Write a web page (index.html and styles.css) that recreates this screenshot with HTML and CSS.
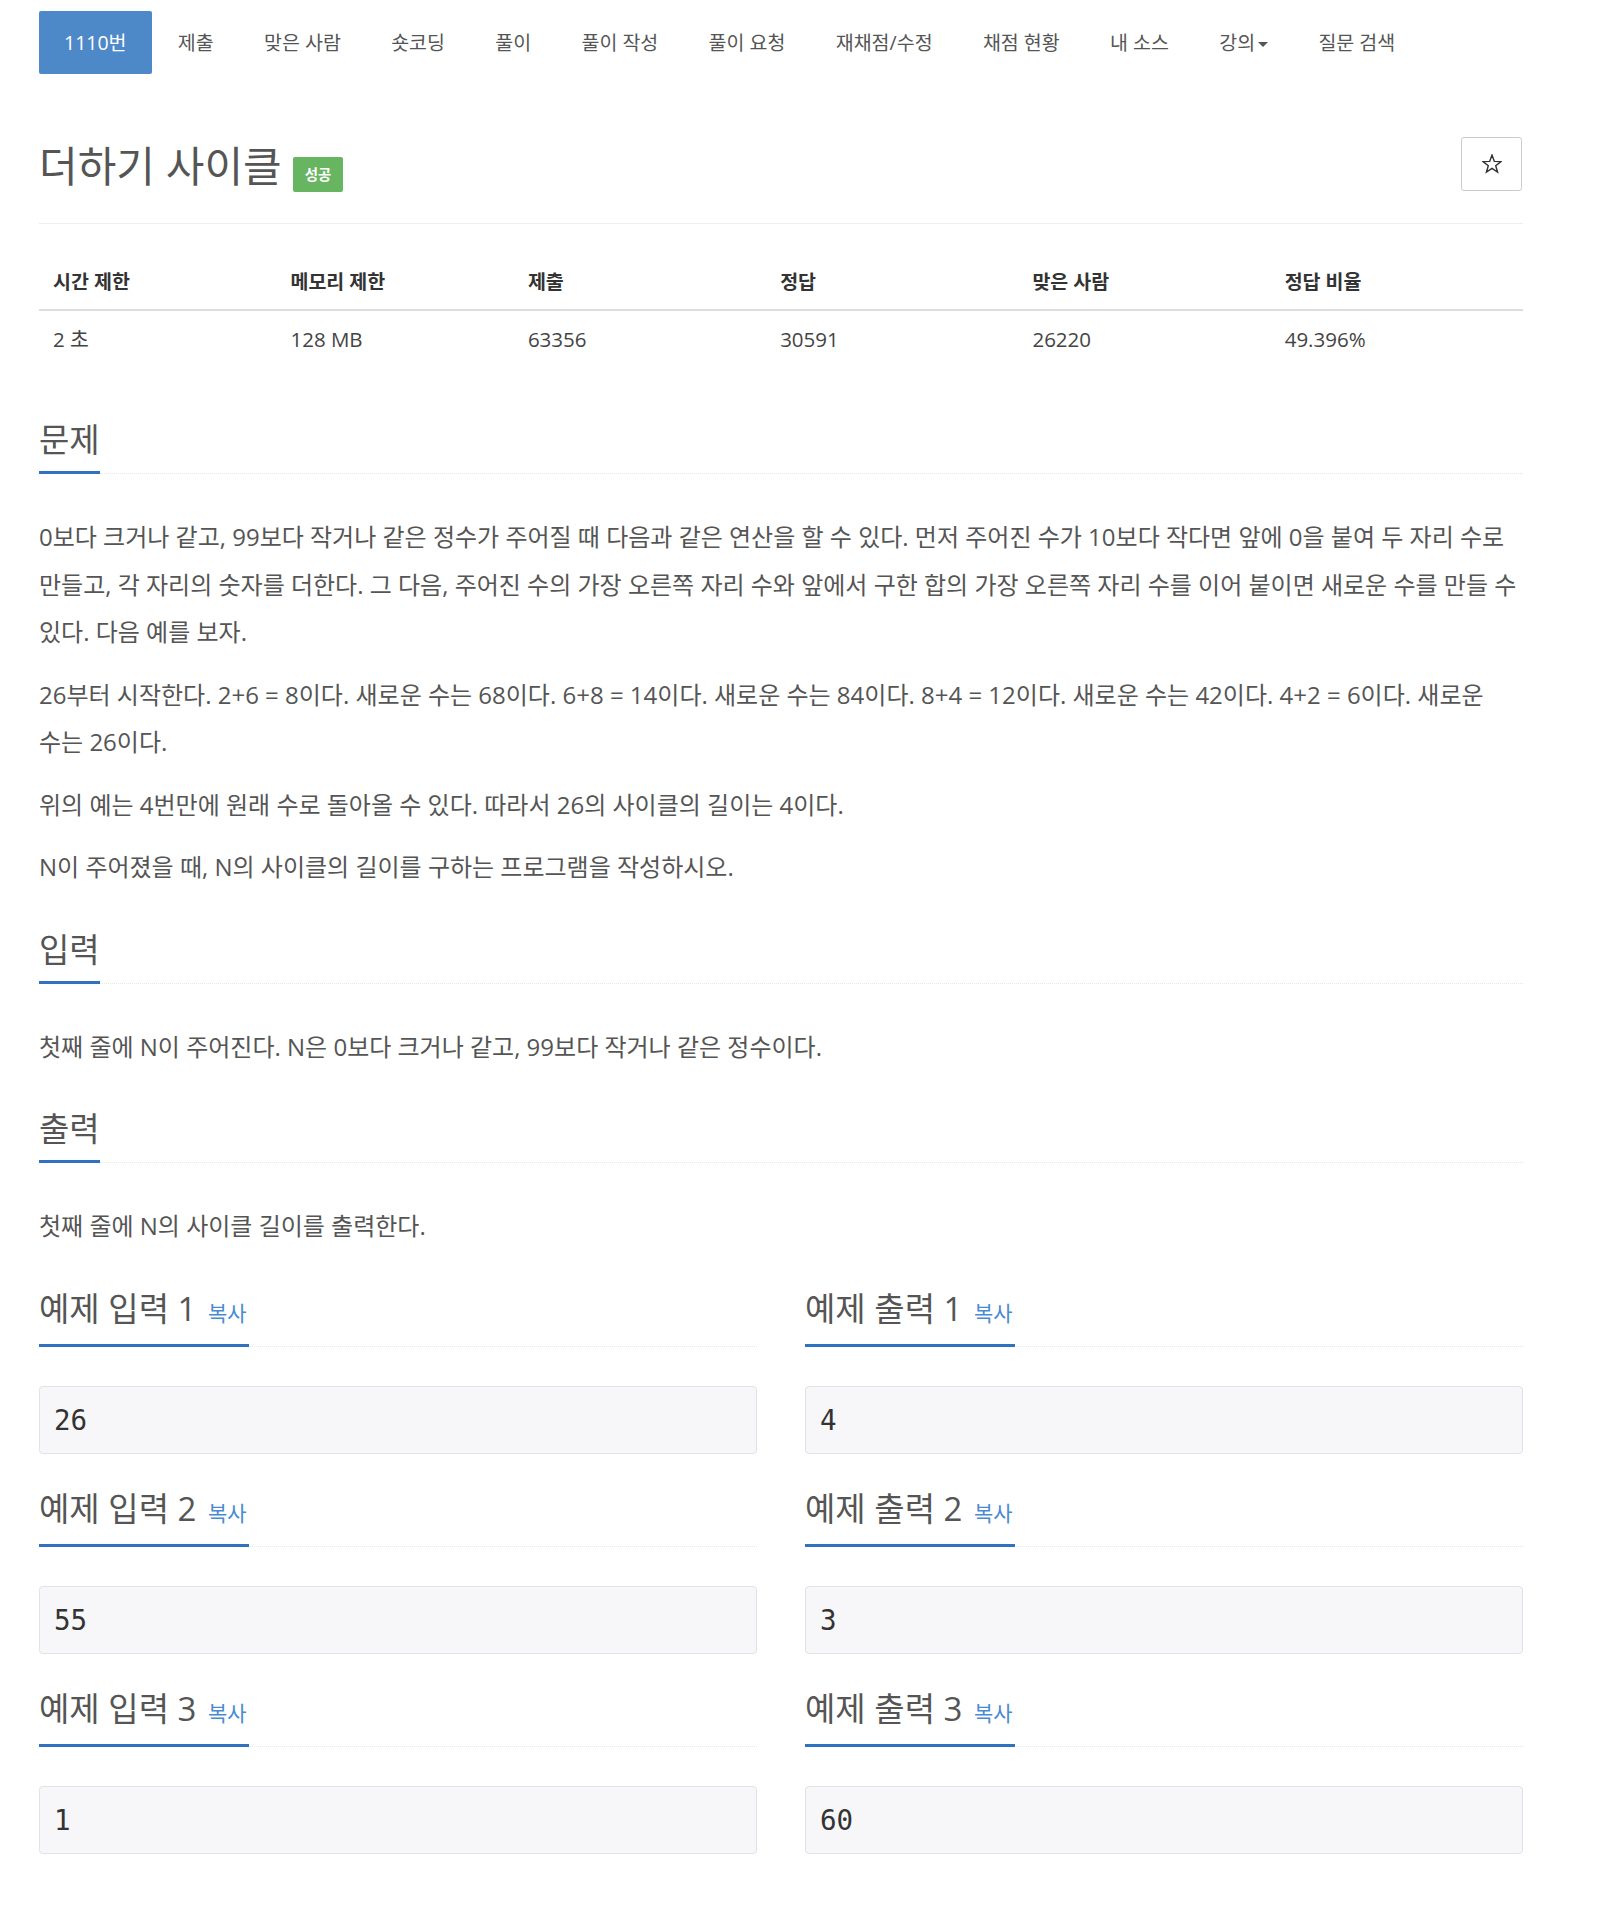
FILE: index.html
```html
<!DOCTYPE html>
<html lang="ko">
  <head>
    <meta charset="UTF-8" />
    <meta name="viewport" content="width=device-width, initial-scale=1.0" />
    <title>1110번: 더하기 사이클</title>
    <link rel="stylesheet" href="styles.css">
  </head>
  <body>
    <div class="container">
      <nav class="tabs">
        <a class="tab active" href="#">1110번</a>
        <a class="tab" href="#">제출</a>
        <a class="tab" href="#">맞은 사람</a>
        <a class="tab" href="#">숏코딩</a>
        <a class="tab" href="#">풀이</a>
        <a class="tab" href="#">풀이 작성</a>
        <a class="tab" href="#">풀이 요청</a>
        <a class="tab" href="#">재채점/수정</a>
        <a class="tab" href="#">채점 현황</a>
        <a class="tab" href="#">내 소스</a>
        <a class="tab" href="#">강의<span class="caret"></span></a>
        <a class="tab" href="#">질문 검색</a>
      </nav>

      <div class="page-header">
        <div class="title-group">
          <h1>더하기 사이클</h1>
          <span class="badge">성공</span>
        </div>
        <button class="star-btn" title="즐겨찾기">
          <svg width="20" height="20" viewBox="0 0 20 20">
            <polygon points="10,1 12.29,7.34 19.03,7.56 13.71,11.71 15.58,18.19 10,14.4 4.42,18.19 6.29,11.71 0.97,7.56 7.71,7.34" fill="none" stroke="#333" stroke-width="1.4" stroke-linejoin="miter" />
          </svg>
        </button>
      </div>

      <table class="stats">
        <colgroup>
          <col class="col-narrow" />
          <col class="col-narrow" />
          <col class="col-wide" />
          <col class="col-wide" />
          <col class="col-wide" />
          <col class="col-wide" />
        </colgroup>
        <thead>
          <tr>
            <th>시간 제한</th>
            <th>메모리 제한</th>
            <th>제출</th>
            <th>정답</th>
            <th>맞은 사람</th>
            <th>정답 비율</th>
          </tr>
        </thead>
        <tbody>
          <tr>
            <td>2 초</td>
            <td>128 MB</td>
            <td>63356</td>
            <td>30591</td>
            <td>26220</td>
            <td>49.396%</td>
          </tr>
        </tbody>
      </table>

      <section class="problem-section">
        <div class="headline"><h2>문제</h2></div>
        <div class="problem-text">
          <p>0보다 크거나 같고, 99보다 작거나 같은 정수가 주어질 때 다음과 같은 연산을 할 수 있다. 먼저 주어진 수가 10보다 작다면 앞에 0을 붙여 두 자리 수로 만들고, 각 자리의 숫자를 더한다. 그 다음, 주어진 수의 가장 오른쪽 자리 수와 앞에서 구한 합의 가장 오른쪽 자리 수를 이어 붙이면 새로운 수를 만들 수 있다. 다음 예를 보자.</p>
          <p>26부터 시작한다. 2+6 = 8이다. 새로운 수는 68이다. 6+8 = 14이다. 새로운 수는 84이다. 8+4 = 12이다. 새로운 수는 42이다. 4+2 = 6이다. 새로운 수는 26이다.</p>
          <p>위의 예는 4번만에 원래 수로 돌아올 수 있다. 따라서 26의 사이클의 길이는 4이다.</p>
          <p>N이 주어졌을 때, N의 사이클의 길이를 구하는 프로그램을 작성하시오.</p>
        </div>
      </section>

      <section class="problem-section">
        <div class="headline"><h2>입력</h2></div>
        <div class="problem-text">
          <p>첫째 줄에 N이 주어진다. N은 0보다 크거나 같고, 99보다 작거나 같은 정수이다.</p>
        </div>
      </section>

      <section class="problem-section">
        <div class="headline"><h2>출력</h2></div>
        <div class="problem-text">
          <p>첫째 줄에 N의 사이클 길이를 출력한다.</p>
        </div>
      </section>

      <div class="samples">
        <section class="sample">
          <div class="headline"><h2>예제 입력 1 <a class="copy" href="#">복사</a></h2></div>
          <pre class="sample-data">26</pre>
        </section>
        <section class="sample">
          <div class="headline"><h2>예제 출력 1 <a class="copy" href="#">복사</a></h2></div>
          <pre class="sample-data">4</pre>
        </section>
        <section class="sample">
          <div class="headline"><h2>예제 입력 2 <a class="copy" href="#">복사</a></h2></div>
          <pre class="sample-data">55</pre>
        </section>
        <section class="sample">
          <div class="headline"><h2>예제 출력 2 <a class="copy" href="#">복사</a></h2></div>
          <pre class="sample-data">3</pre>
        </section>
        <section class="sample">
          <div class="headline"><h2>예제 입력 3 <a class="copy" href="#">복사</a></h2></div>
          <pre class="sample-data">1</pre>
        </section>
        <section class="sample">
          <div class="headline"><h2>예제 출력 3 <a class="copy" href="#">복사</a></h2></div>
          <pre class="sample-data">60</pre>
        </section>
      </div>
    </div>
  </body>
</html>
```

FILE: styles.css
```css
* {
  box-sizing: border-box;
  margin: 0;
  padding: 0;
}

body {
  background: #fff;
  color: #555;
  font-family: "Open Sans", "Noto Sans CJK KR", sans-serif;
  word-break: keep-all;
}

a {
  text-decoration: none;
}

.container {
  width: 1484px;
  margin-left: 39px;
}

/* top tabs */
.tabs {
  display: flex;
  gap: 2.3px;
  margin-top: 11px;
}

.tab {
  display: block;
  height: 63px;
  line-height: 63px;
  padding: 0 24px;
  font-size: 19.5px;
  color: #555;
  border-radius: 2px;
}

.tab.active {
  background: #4d88c8;
  color: #fff;
  padding: 0 25px;
}

.caret {
  display: inline-block;
  width: 0;
  height: 0;
  margin-left: 3px;
  vertical-align: middle;
  border-top: 5px solid #555;
  border-left: 5px solid transparent;
  border-right: 5px solid transparent;
}

/* title */
.page-header {
  display: flex;
  justify-content: space-between;
  margin-top: 63px;
  padding-bottom: 32px;
  border-bottom: 1px solid #eee;
}

.title-group {
  display: flex;
  align-items: flex-end;
  gap: 11px;
}

.title-group h1 {
  align-self: center;
  margin-top: 4px;
  font-size: 42px;
  line-height: 50px;
  font-weight: 400;
  color: #555;
}

.badge {
  height: 35px;
  line-height: 35px;
  padding: 0 12px;
  margin-bottom: -1px;
  background: #67b560;
  color: #fff;
  font-size: 14.5px;
  font-weight: 700;
  border-radius: 2px;
}

.star-btn {
  width: 61px;
  height: 54px;
  display: flex;
  align-items: center;
  justify-content: center;
  margin-right: 1px;
  background: #fff;
  border: 1px solid #ccc;
  border-radius: 3px;
  cursor: pointer;
}

/* limits table */
.stats {
  width: 100%;
  table-layout: fixed;
  margin-top: 33px;
  margin-bottom: 49px;
  border-collapse: collapse;
  color: #333;
}

.col-narrow {
  width: 16%;
}

.col-wide {
  width: 17%;
}

.stats th,
.stats td {
  text-align: left;
  padding-left: 14px;
}

.stats th {
  padding-top: 12px;
  padding-bottom: 14px;
  font-size: 19.5px;
  line-height: 26px;
  font-weight: 700;
  border-bottom: 2px solid #ddd;
}

.stats td {
  padding-top: 14px;
  padding-bottom: 14px;
  font-size: 20.5px;
  line-height: 28px;
  color: #444;
}

/* sections */
.problem-section {
  margin-bottom: 35px;
}

.headline {
  border-bottom: 1px dotted #e4e9f0;
  margin-bottom: 39px;
}

.headline h2 {
  display: inline-block;
  font-size: 33px;
  line-height: 40px;
  font-weight: 400;
  color: #555;
  padding-top: 4px;
  padding-bottom: 11px;
  margin-bottom: -1px;
  border-bottom: 3px solid #3171c1;
}

.copy {
  font-size: 21px;
  color: #4a8ad0;
  margin-left: 3px;
  margin-right: 2px;
}

.problem-text p {
  font-size: 24px;
  line-height: 47.5px;
  margin-bottom: 15px;
  color: #555;
}

/* samples */
.samples {
  display: grid;
  grid-template-columns: 1fr 1fr;
  column-gap: 48px;
}

.sample-data {
  margin-bottom: 31px;
  padding: 14px;
  font-family: "DejaVu Sans Mono", monospace;
  font-size: 27.5px;
  line-height: 38px;
  color: #333;
  background: #f7f7f9;
  border: 1px solid #e1e1e8;
  border-radius: 4px;
}
```
